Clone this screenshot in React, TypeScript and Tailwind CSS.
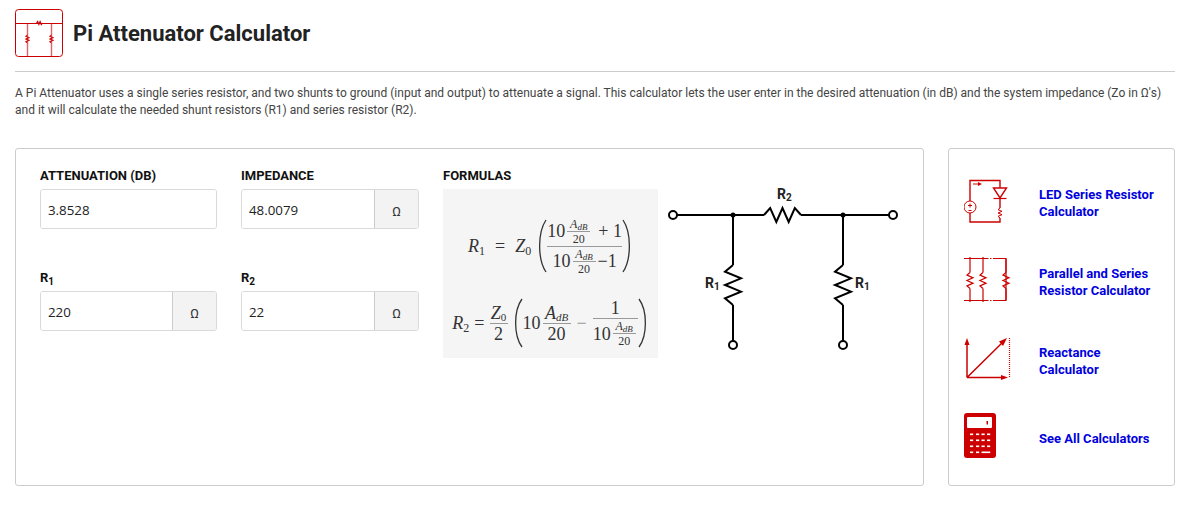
import React from 'react';

const RED = '#cc0000';

const zig = (x: number, y: number, len: number, amp: number, vertical: boolean, n = 6) => {
  const step = len / n;
  const pts: string[] = [];
  for (let i = 0; i <= n; i++) {
    const along = i * step;
    const off = i === 0 || i === n ? 0 : i % 2 ? -amp : amp;
    pts.push(vertical ? `${x + off},${y + along}` : `${x + along},${y + off}`);
  }
  return pts.join(' ');
};

const HeaderIcon = () => (
  <svg width="48" height="48" viewBox="0 0 48 48" fill="none" className="shrink-0">
    <rect x="0.5" y="0.5" width="47" height="47" rx="3" stroke={RED} />
    <path d="M1 14.5H47" stroke={RED} />
    <path d="M12.5 15V47M36.5 15V47" stroke={RED} strokeOpacity="0.6" strokeWidth="1.4" />
    <polyline points={zig(21.5, 14, 6, 1.5, false, 5)} stroke={RED} fill="none" strokeWidth="1.2" />
    <polyline points={zig(12.5, 26, 8, 2, true)} stroke={RED} fill="none" />
    <polyline points={zig(36.5, 26, 8, 2, true)} stroke={RED} fill="none" />
  </svg>
);

const LedIcon = () => (
  <svg width="48" height="50" viewBox="0 0 48 50" fill="none">
    <path d="M6 23V2.5H36V10M36 20V30M36 40V44H6V35" stroke={RED} strokeWidth="1.4" />
    <circle cx="6" cy="29" r="6" stroke={RED} />
    <path d="M6 25.5V29.5M4 27.5H8" stroke={RED} />
    <path d="M4.5 32.5H7.5" stroke={RED} />
    <path d="M29.5 10H42.5L36 20Z" stroke={RED} strokeWidth="1.4" />
    <path d="M29.5 20.5H42.5" stroke={RED} strokeWidth="1.2" />
    <polyline points={zig(36, 30, 10, 2, true)} stroke={RED} />
    <path d="M9 6H15" stroke={RED} />
    <path d="M14 4L18 6L14 8Z" fill={RED} />
  </svg>
);

const ParallelIcon = () => (
  <svg width="48" height="50" viewBox="0 0 48 50" fill="none">
    <path d="M0 1.5H23M29 1.5H42V43.5H29M23 43.5H0" stroke={RED} strokeWidth="1.2" />
    <path d="M23 1.5H29M23 43.5H29" stroke={RED} strokeDasharray="1.5 1.5" />
    <path d="M6 0V15.5M6 31.5V45M19 0V15.5M19 31.5V45M42 2V15.5M42 31.5V43" stroke={RED} strokeWidth="1.2" />
    <polyline points={zig(6, 15.5, 16, 3, true)} stroke={RED} strokeWidth="1.2" />
    <polyline points={zig(19, 15.5, 16, 3, true)} stroke={RED} strokeWidth="1.2" />
    <polyline points={zig(42, 15.5, 16, 3, true)} stroke={RED} strokeWidth="1.2" />
  </svg>
);

const ReactanceIcon = () => (
  <svg width="48" height="46" viewBox="0 0 48 46" fill="none">
    <path d="M3 39.5V6M3 39.5H40M3 39.5L39 4" stroke={RED} strokeWidth="1.5" />
    <path d="M3 0L0.5 7H5.5Z" fill={RED} />
    <path d="M44 39.5L37 37V42Z" fill={RED} />
    <path d="M43 0L35 3.5L39 8Z" fill={RED} />
    <path d="M45.5 0V40" stroke={RED} strokeWidth="1.2" strokeDasharray="1 1" />
  </svg>
);

const CalcIcon = () => {
  const rows = [0, 6, 12];
  const cols = [6, 12, 17.5, 23];
  return (
    <svg width="32" height="45" viewBox="0 0 32 45" fill="none" className="-mt-[5px]">
      <rect width="32" height="45" rx="3" fill={RED} />
      <rect x="3" y="4" width="25" height="11" rx="1" fill="#fff" />
      <rect x="22.5" y="8" width="1.5" height="3.5" fill={RED} />
      {rows.map(r =>
        cols.map(c => <rect key={`${r}-${c}`} x={c} y={20.5 + r} width="3.2" height="1.6" fill="#fff" />)
      )}
      <rect x="6" y="38.5" width="3.2" height="1.6" fill="#fff" />
      <rect x="12" y="38.5" width="3.2" height="1.6" fill="#fff" />
      <rect x="17.5" y="38.5" width="8.7" height="1.6" fill="#fff" />
    </svg>
  );
};

const Omega = () => (
  <span className="flex w-[44px] shrink-0 items-center justify-center border-l border-[#ccc] bg-[#f3f3f3] pt-[6px] text-[13px] text-[#333]">
    Ω
  </span>
);

const Field = ({ value, unit }: { value: string; unit?: boolean }) => (
  <div className="flex h-[40px] overflow-hidden rounded-[3px] border border-[#d9d9d9] bg-white">
    <input
      readOnly
      defaultValue={value}
      className="w-full min-w-0 bg-white px-[7px] pt-[3px] font-['Open_Sans',sans-serif] text-[13.33px] text-[#222] outline-none"
    />
    {unit && <Omega />}
  </div>
);

const Label = ({ children }: { children: React.ReactNode }) => (
  <div className="mb-[6px] h-[14px] text-[13px] leading-[14px] font-bold text-[#111]">{children}</div>
);

const Sub = ({ children }: { children: React.ReactNode }) => (
  <>
    R<sub className="text-[10px]">{children}</sub>
  </>
);

const Frac = ({ top, bottom, className = '' }: { top: React.ReactNode; bottom: React.ReactNode; className?: string }) => (
  <span className={`inline-flex flex-col items-center ${className}`}>
    <span className="whitespace-nowrap leading-none">{top}</span>
    <span className="my-[1px] h-[1px] w-full bg-[#999]" />
    <span className="whitespace-nowrap leading-none">{bottom}</span>
  </span>
);

const Exp = () => (
  <Frac
    className="mx-[2px] w-[23px] align-middle text-[12px]"
    top={<i>A<sub className="text-[9px]">dB</sub></i>}
    bottom="20"
  />
);

const Paren = ({ h, flip }: { h: number; flip?: boolean }) => (
  <svg width="11" height={h} viewBox={`0 0 11 ${h}`} fill="none" className={`shrink-0 ${flip ? 'scale-x-[-1]' : ''}`}>
    <path d={`M10 1C1.5 ${h * 0.25} 1.5 ${h * 0.75} 10 ${h - 1}`} stroke="#333" strokeWidth="1.3" />
  </svg>
);

const Formulas = () => (
  <div className="flex h-[169px] w-[215px] flex-col items-center bg-[#f5f5f5] pt-[29px] font-['Liberation_Serif',serif] text-[18px] text-[#333]">
    <div className="flex h-[56px] items-center">
      <span className="mr-[5px] whitespace-nowrap"><i>R</i><sub className="text-[12px]">1</sub><span className="mx-[10px]">=</span><i>Z</i><sub className="text-[12px]">0</sub></span>
      <Paren h={54} />
      <Frac
        top={<span className="inline-flex items-center">10<Exp /><span className="ml-[6px]">+ 1</span></span>}
        bottom={<span className="inline-flex items-center">10<Exp />−1</span>}
      />
      <Paren h={54} flip />
    </div>
    <div className="mt-[21px] flex h-[56px] items-center">
      <span className="mr-[5px] whitespace-nowrap"><i>R</i><sub className="text-[12px]">2</sub><span className="ml-[5px]">=</span></span>
      <Frac className="mr-[4px] w-[18px]" top={<span><i>Z</i><sub className="text-[11px]">0</sub></span>} bottom="2" />
      <Paren h={50} />
      <span className="mr-[2px]">10</span>
      <Frac className="w-[28px]" top={<i>A<sub className="text-[11px]">dB</sub></i>} bottom="20" />
      <span className="mx-[6px] text-[#999]">−</span>
      <Frac top="1" bottom={<span className="inline-flex items-center">10<Exp /></span>} />
      <Paren h={50} flip />
    </div>
  </div>
);

const Circuit = () => (
  <svg width="240" height="172" viewBox="665 185 240 172" fill="none" className="ml-[7px] -mt-[4px] shrink-0">
    <g stroke="#000" strokeWidth="2">
      <path d="M677 215H764M801 215H889M733 215V265M733 305V341M843 215V265M843 305V341" />
      <polyline points={zig(764, 215, 37, 7, false)} />
      <polyline points={zig(733, 265, 40, 8, true)} />
      <polyline points={zig(843, 265, 40, 8, true)} />
      <circle cx="673" cy="215" r="4" fill="#fff" />
      <circle cx="893" cy="215" r="4" fill="#fff" />
      <circle cx="733" cy="345" r="4" fill="#fff" />
      <circle cx="843" cy="345" r="4" fill="#fff" />
    </g>
    <circle cx="733" cy="215" r="2.5" fill="#000" />
    <circle cx="843" cy="215" r="2.5" fill="#000" />
    <g fill="#222" fontFamily="Roboto, sans-serif" fontWeight="700" fontSize="14">
      <text x="777" y="199">R<tspan fontSize="10" dy="2">2</tspan></text>
      <text x="705" y="288">R<tspan fontSize="10" dy="2">1</tspan></text>
      <text x="855" y="288">R<tspan fontSize="10" dy="2">1</tspan></text>
    </g>
  </svg>
);

const links = [
  { icon: <LedIcon />, lines: ['LED Series Resistor', 'Calculator'], h: 'h-[79px]' },
  { icon: <ParallelIcon />, lines: ['Parallel and Series', 'Resistor Calculator'], h: 'h-[79px]' },
  { icon: <ReactanceIcon />, lines: ['Reactance', 'Calculator'], h: 'h-[79px]' },
  { icon: <CalcIcon />, lines: ['See All Calculators'], h: 'h-[76px]' },
];

export default function App() {
  return (
    <div className="h-[505px] w-[1195px] overflow-hidden bg-white pt-[9px] pr-[20px] pl-[15px] font-['Roboto',sans-serif]">
      <header className="flex items-center gap-[10px] border-b border-[#ccc] pb-[14px]">
        <HeaderIcon />
        <h1 className="text-[22px] font-bold text-[#222]">Pi Attenuator Calculator</h1>
      </header>
      <p className="mt-[13px] h-[34px] text-[12px] leading-[16.8px] text-[#444]">
        A Pi Attenuator uses a single series resistor, and two shunts to ground (input and output) to attenuate a signal. This calculator lets the user enter in the desired attenuation (in dB) and the system impedance (Zo in Ω's) and it will calculate the needed shunt resistors (R1) and series resistor (R2).
      </p>
      <div className="mt-[29px] flex gap-[24px]">
        <section className="flex h-[338px] w-[909px] rounded-[3px] border border-[#ccc] pt-[20px] pl-[24px]">
          <div className="grid w-[379px] shrink-0 grid-cols-[177px_178px] content-start gap-x-[24px] gap-y-[42px]">
            <div><Label>ATTENUATION (DB)</Label><Field value="3.8528" /></div>
            <div><Label>IMPEDANCE</Label><Field value="48.0079" unit /></div>
            <div><Label><Sub>1</Sub></Label><Field value="220" unit /></div>
            <div><Label><Sub>2</Sub></Label><Field value="22" unit /></div>
          </div>
          <div className="ml-[24px]">
            <Label>FORMULAS</Label>
            <div className="flex items-start">
              <Formulas />
              <Circuit />
            </div>
          </div>
        </section>
        <aside className="h-[338px] w-[227px] rounded-[3px] border border-[#ccc] pt-[14px] pl-[15px]">
          {links.map(link => (
            <div key={link.lines[0]} className={`flex items-center ${link.h}`}>
              <div className="flex w-[75px] shrink-0">{link.icon}</div>
              <a href="#" className="text-[13px] leading-[17px] font-bold text-[#0000dd]">
                {link.lines.map(l => <div key={l}>{l}</div>)}
              </a>
            </div>
          ))}
        </aside>
      </div>
    </div>
  );
}
